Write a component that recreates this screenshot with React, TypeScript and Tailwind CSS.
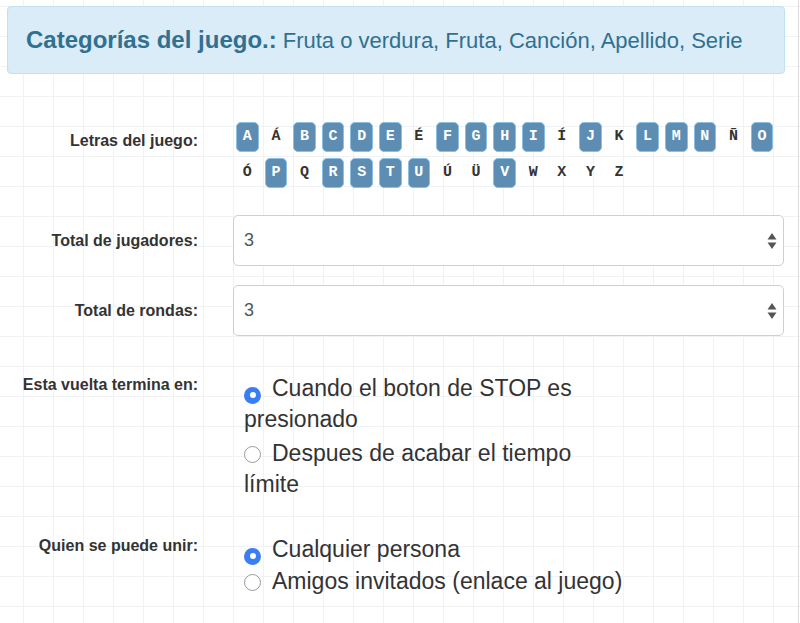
import React from 'react';

const rowOne = ['A', 'Á', 'B', 'C', 'D', 'E', 'É', 'F', 'G', 'H', 'I', 'Í', 'J', 'K', 'L', 'M', 'N', 'Ñ', 'O'];
const rowTwo = ['Ó', 'P', 'Q', 'R', 'S', 'T', 'U', 'Ú', 'Ü', 'V', 'W', 'X', 'Y', 'Z'];
const picked = new Set(['A', 'B', 'C', 'D', 'E', 'F', 'G', 'H', 'I', 'J', 'L', 'M', 'N', 'O', 'P', 'R', 'S', 'T', 'U', 'V']);

const Letter = ({ l }: { l: string }) => {
    const on = picked.has(l);
    return (
        <span
            className={
                on
                    ? 'mx-[3px] flex h-[30px] w-[22.6px] items-center justify-center rounded-[5px] border border-[#8cc0e2] bg-[#5d8db2] text-white'
                    : 'mx-[3px] flex h-[30px] w-[22.6px] items-center justify-center text-[#333]'
            }
        >
            {l}
        </span>
    );
};

const Label = ({ children, className = '' }: { children: React.ReactNode, className?: string }) => (
    <div className={`w-[191px] shrink-0 text-right text-[16px] font-bold text-[#333] ${className}`}>{children}</div>
);

const NumberBox = ({ value }: { value: string }) => (
    <div className="flex h-[51px] w-[551px] items-center justify-between rounded-[5px] border border-[#cfcfcf] bg-white pl-[10px] pr-[6px] text-[18px] text-[#555]">
        <span>{value}</span>
        <svg width="10" height="18" viewBox="0 0 10 18">
            <path d="M5 1 L9.5 7.5 H0.5 Z" fill="#555" />
            <path d="M5 17 L9.5 10.5 H0.5 Z" fill="#555" />
        </svg>
    </div>
);

const Radio = ({ checked }: { checked?: boolean }) =>
    checked ? (
        <span className="mr-[11px] inline-flex h-[17px] w-[17px] translate-y-[2px] items-center justify-center rounded-full bg-[#3a7ef2] align-baseline">
            <span className="h-[6px] w-[6px] rounded-full bg-white" />
        </span>
    ) : (
        <span className="mr-[11px] inline-block h-[17px] w-[17px] translate-y-[2px] rounded-full border border-[#9a9a9a] bg-white align-baseline" />
    );

export default function App() {
    return (
        <div
            className="h-[623px] w-[800px] overflow-hidden bg-white bg-[linear-gradient(to_right,#f0f2f4_1px,transparent_1px),linear-gradient(to_bottom,#f0f2f4_1px,transparent_1px)] bg-[size:30px_30px] bg-[position:23px_6px] font-['Liberation_Sans',Arial,sans-serif]"
        >
            <div className="h-full w-[799px] border-r border-[#dcdcdc] pl-[7px] pt-[6px]">
                <div className="flex h-[68px] w-[778px] items-center rounded-[4px] border border-[#bfe2f0] bg-[#d9ecf7] pl-[18px] text-[#31708f]">
                    <span className="text-[24px] font-bold">Categorías del juego.:</span>
                    <span className="ml-[6px] text-[22px]">Fruta o verdura, Fruta, Canción, Apellido, Serie</span>
                </div>

                <div className="mt-[48px] flex">
                    <Label className="pt-[7px]">Letras del juego:</Label>
                    <div className="ml-[35px] flex flex-col gap-[6px] font-['Liberation_Mono','Courier_New',monospace] text-[15px] font-bold">
                        <div className="flex">{rowOne.map(l => <Letter key={l} l={l} />)}</div>
                        <div className="flex">{rowTwo.map(l => <Letter key={l} l={l} />)}</div>
                    </div>
                </div>

                <div className="mt-[27px] flex items-center">
                    <Label>Total de jugadores:</Label>
                    <div className="ml-[35px]"><NumberBox value="3" /></div>
                </div>

                <div className="mt-[19px] flex items-center">
                    <Label>Total de rondas:</Label>
                    <div className="ml-[35px]"><NumberBox value="3" /></div>
                </div>

                <div className="mt-[37px] flex">
                    <Label>Esta vuelta termina en:</Label>
                    <div className="ml-[46px] w-[382px] text-[23px] leading-[31px] text-[#333]">
                        <div><Radio checked />Cuando el boton de STOP es presionado</div>
                        <div className="mt-[3px]"><Radio />Despues de acabar el tiempo límite</div>
                    </div>
                </div>

                <div className="mt-[33px] flex">
                    <Label className="pt-[1px]">Quien se puede unir:</Label>
                    <div className="ml-[46px] w-[382px] text-[23px] leading-[32px] text-[#333]">
                        <div><Radio checked />Cualquier persona</div>
                        <div><Radio />Amigos invitados (enlace al juego)</div>
                    </div>
                </div>
            </div>
        </div>
    );
}
